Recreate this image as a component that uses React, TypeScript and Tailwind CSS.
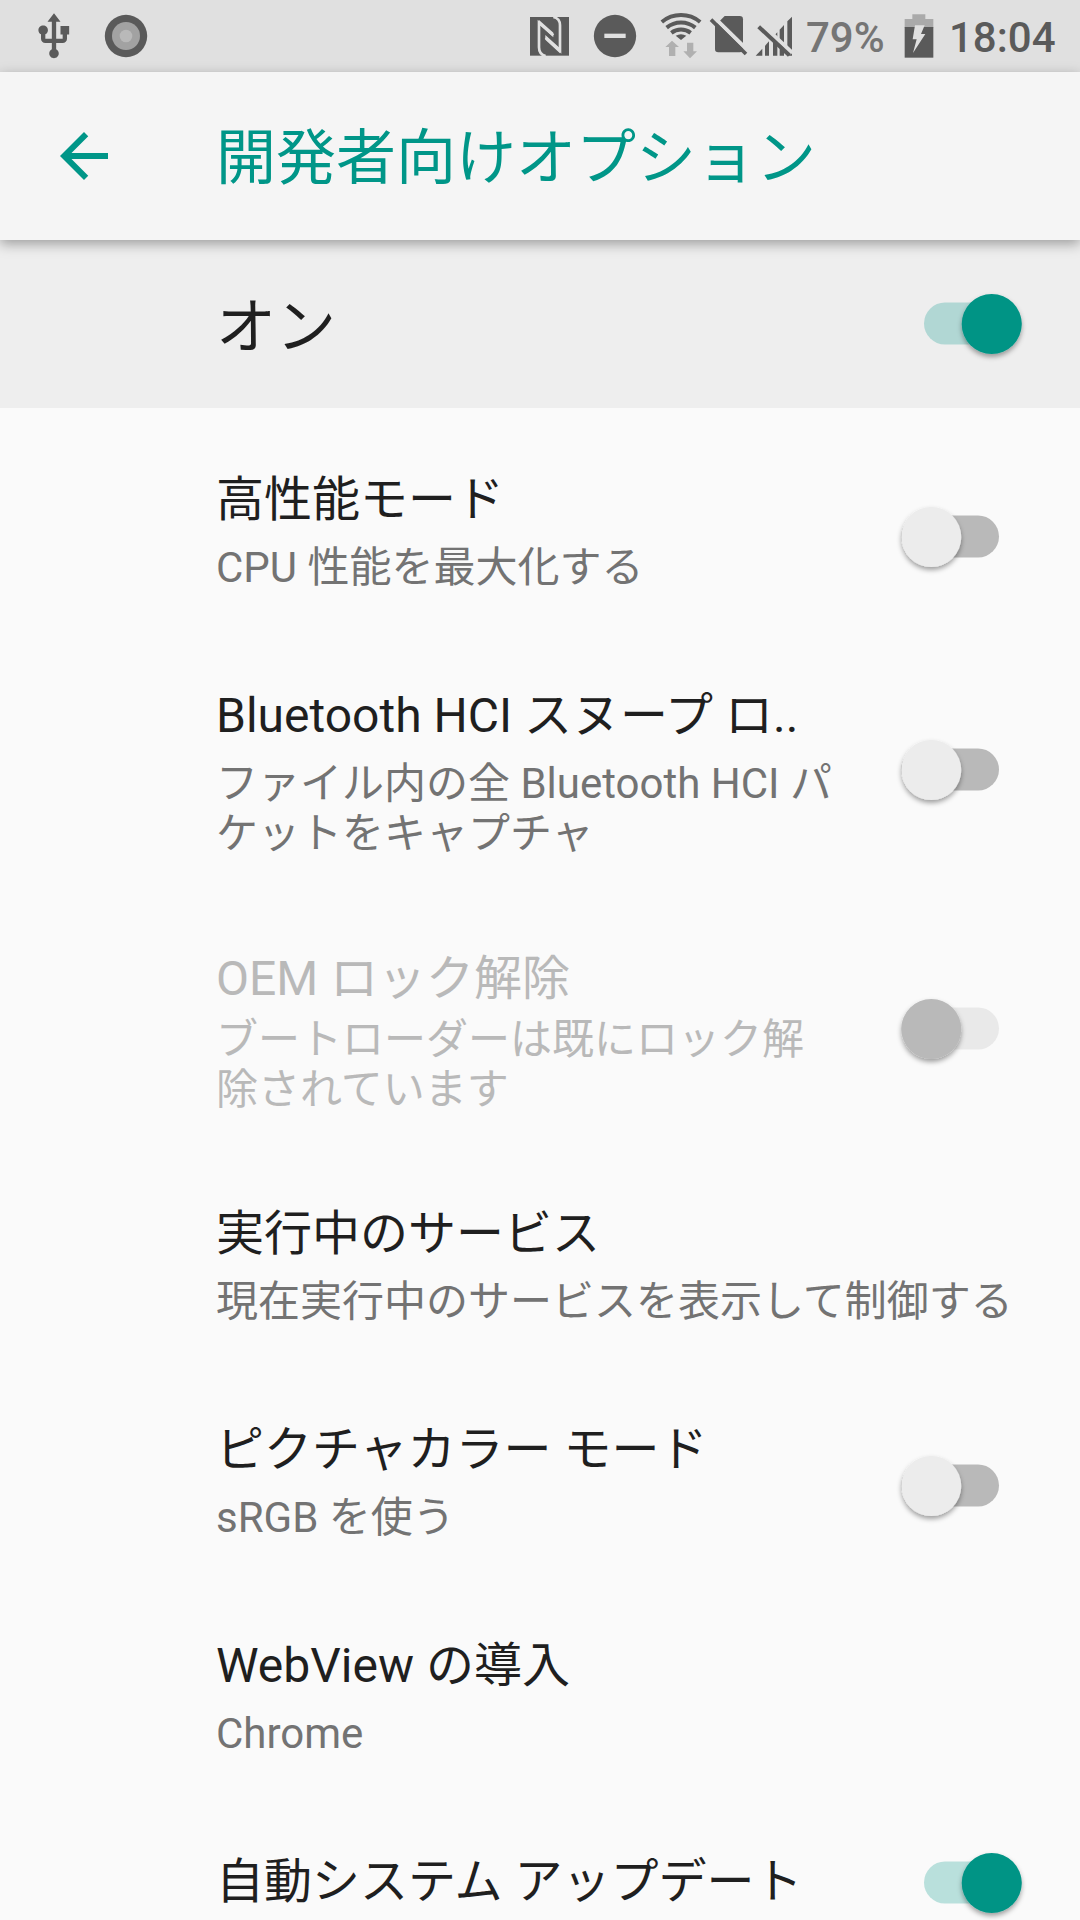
const INK = "#5a5a5a";
const LIGHT = "#e0e0e0";

type SwitchState = "on" | "off" | "disabled";

function Switch({ state, overWhite = true }: { state: SwitchState; overWhite?: boolean }) {
  const on = state === "on";
  const track = on ? (overWhite ? "#b9e0dc" : "#b1d7d4") : state === "off" ? "#b9b9b9" : "#e9e9e9";
  const thumb = on ? "#009485" : state === "off" ? "#ececec" : "#b9b9b9";
  return (
    <svg className="block shrink-0" width="124" height="80" viewBox="0 0 124 80">
      <defs>
        <filter id="thumbShadow" x="-20%" y="-20%" width="140%" height="150%">
          <feDropShadow dx="0" dy="3" stdDeviation="2.5" floodColor="#000" floodOpacity="0.36" />
        </filter>
      </defs>
      <rect x="13" y="18.5" width="98" height="42" rx="21" fill={track} />
      <circle cx={on ? 80.7 : 43.3} cy="40" r="30" fill={thumb} filter="url(#thumbShadow)" />
    </svg>
  );
}

function UsbIcon() {
  return (
    <svg className="ml-[28px] shrink-0" width="52" height="51" viewBox="0 0 24 24" preserveAspectRatio="none" fill={INK}>
      <path d="M15 7v4h1v2h-3V5h2l-3-4-3 4h2v8H8v-2.07c.7-.37 1.2-1.08 1.2-1.93 0-1.21-.99-2.2-2.2-2.2-1.21 0-2.2.99-2.2 2.2 0 .85.5 1.56 1.2 1.93V13c0 1.11.89 2 2 2h3v3.05c-.71.37-1.2 1.1-1.2 1.95 0 1.22.99 2.2 2.2 2.2 1.21 0 2.2-.98 2.2-2.2 0-.85-.49-1.58-1.2-1.95V15h3c1.11 0 2-.89 2-2v-2h1V7h-4z" />
    </svg>
  );
}

function RecordIcon() {
  return (
    <svg className="ml-[24px] shrink-0" width="44" height="44" viewBox="0 0 44 44">
      <circle cx="22" cy="22" r="21.2" fill={INK} />
      <circle cx="22" cy="22" r="14" fill="#a2a2a2" />
      <circle cx="22" cy="22" r="6.3" fill="#b9b9b9" />
    </svg>
  );
}

/* NFC, do-not-disturb, wifi, no-SIM and no-signal glyphs share one 300x72 strip. */
function StatusGlyphs() {
  return (
    <svg className="ml-auto shrink-0" width="300" height="72" viewBox="0 0 900 216">
      <rect x="90" y="51" width="117" height="116" fill={INK} />
      <g fill="none" stroke={LIGHT} strokeWidth="8">
        <path d="M137 168C122 165 117 156 117 142V69L159 109V99L137 79" strokeWidth="0" />
        <path d="M137 168C122 165 117 156 117 142V68L160 106" />
        <path d="M160 51C175 54 180 62 180 76V152L137 113" />
      </g>
      <path d="M117 60L160 98V112L117 73Z" fill={LIGHT} />
      <path d="M180 160L136 119V105L180 145Z" fill={LIGHT} />

      <circle cx="345" cy="108" r="63.5" fill={INK} />
      <rect x="313" y="101" width="64" height="13" fill={LIGHT} />

      <g fill="none" stroke={INK} strokeWidth="12">
        <path d="M485.500 66A90 90 0 0 1 600.500 66" />
        <path d="M500 83A68 68 0 0 1 586 83" />
        <path d="M514 98.500A47 47 0 0 1 572 98.500" />
      </g>
      <path d="M527 107Q543 98 559 107L543 120Z" fill={INK} />
      <g fill="#b0b0b0">
        <path d="M516 122L537 141H526V168H507V141H496Z" />
        <path d="M570 175L550 154H561V128H580V154H591Z" />
      </g>

      <path d="M674 48H719Q729 48 729 58V147Q729 157 719 157H655Q645 157 645 147V77Z" fill={INK} />
      <path d="M640 50L745 153" stroke={LIGHT} strokeWidth="12" />
      <path d="M633 59L738 162" stroke={INK} strokeWidth="11" />

      <g fill={INK}>
        <path d="M767 167L787 146V167Z" />
        <path d="M795 137L807 124V167H795Z" />
        <path d="M819 111L832 97V167H819Z" />
        <path d="M839 89L852 75V167H839Z" />
        <path d="M862 64L876 50V167H862Z" />
      </g>
      <path d="M784 72L877 159" stroke={LIGHT} strokeWidth="13" />
      <path d="M776 80L868 166" stroke={INK} strokeWidth="12" />
    </svg>
  );
}

function BatteryIcon() {
  return (
    <svg className="shrink-0" width="30" height="46" viewBox="0 0 90 138">
      <path d="M25 4H64V18H88V44H2V18H25Z" fill="#aaa" />
      <rect x="2" y="42" width="86" height="92" fill={INK} />
      <path d="M33 37H62L51 63H64L27 120L38 79H26Z" fill={LIGHT} />
    </svg>
  );
}

function StatusBar() {
  return (
    <div className="flex h-[72px] items-center bg-[#e0e0e0] pr-[23px]">
      <UsbIcon />
      <RecordIcon />
      <StatusGlyphs />
      <span className="ml-[6px] w-[80px] whitespace-nowrap pt-[3px] text-[42px] font-medium leading-[48px] text-[#757575]">79%</span>
      <span className="ml-[18px] flex"><BatteryIcon /></span>
      <span className="ml-[15px] w-[108px] whitespace-nowrap pt-[3px] text-[42px] font-medium leading-[48px] text-[#5a5a5a]">18:04</span>
    </div>
  );
}

type Setting = {
  title: string;
  lines: string[];
  height: string;
  gap: string;
  state?: SwitchState;
  lift?: string;
};

const SETTINGS: Setting[] = [
  { title: "高性能モード", lines: ["CPU 性能を最大化する"], height: "h-[216px]", gap: "mt-[13px]", state: "off", lift: "mt-[68px] mr-[68px]" },
  { title: "Bluetooth HCI スヌープ ロ..", lines: ["ファイル内の全 Bluetooth HCI パ", "ケットをキャプチャ"], height: "h-[263px]", gap: "mt-[13px]", state: "off", lift: "mt-[85px] mr-[68px]" },
  { title: "OEM ロック解除", lines: ["ブートローダーは既にロック解", "除されています"], height: "h-[255px]", gap: "mt-[6px]", state: "disabled", lift: "mt-[81px] mr-[68px]" },
  { title: "実行中のサービス", lines: ["現在実行中のサービスを表示して制御する"], height: "h-[216px]", gap: "mt-[13px]" },
  { title: "ピクチャカラー モード", lines: ["sRGB を使う"], height: "h-[216px]", gap: "mt-[13px]", state: "off", lift: "mt-[67px] mr-[68px]" },
  { title: "WebView の導入", lines: ["Chrome"], height: "h-[216px]", gap: "mt-[13px]" },
  { title: "自動システム アップデート", lines: [], height: "h-[109px]", gap: "", state: "on", lift: "mt-[32px] mr-[45px]" },
];

function SettingRow({ title, lines, height, gap, state, lift }: Setting) {
  const disabled = state === "disabled";
  return (
    <div className={`flex shrink-0 items-start justify-between pl-[216px] ${height}`}>
      <div className="whitespace-nowrap pt-[41px]">
        <div className={`text-[48px] leading-[60px] ${disabled ? "text-[#b9b9b9]" : "text-[#1f1f1f]"}`}>{title}</div>
        <div className={`text-[42px] leading-[49.5px] ${gap} ${disabled ? "text-[#b9b9b9]" : "text-[#737373]"}`}>
          {lines.map((line) => (
            <div key={line}>{line}</div>
          ))}
        </div>
      </div>
      {state && (
        <div className={lift}>
          <Switch state={state} />
        </div>
      )}
    </div>
  );
}

export default function App() {
  return (
    <div lang="ja" className="flex h-[1920px] w-[1080px] flex-col overflow-hidden bg-[#fafafa] font-[Roboto,'Noto_Sans_CJK_JP',sans-serif]">
      <StatusBar />
      <header className="relative z-10 flex h-[168px] shrink-0 items-center bg-[#f5f5f5] pl-[48px] shadow-[0_4px_12px_rgba(0,0,0,0.34)]">
        <svg width="72" height="72" viewBox="0 0 24 24" fill="#009688">
          <path d="M20 11H7.83l5.59-5.59L12 4l-8 8 8 8 1.41-1.41L7.83 13H20z" />
        </svg>
        <h1 className="ml-[96px] pt-[6px] text-[60px] leading-[72px] text-[#009688]">開発者向けオプション</h1>
      </header>
      <div className="flex h-[168px] shrink-0 items-center justify-between bg-[#eeeeee] pl-[216px] pr-[45px]">
        <span className="pt-[7px] text-[60px] leading-[72px] text-[#1f1f1f]">オン</span>
        <Switch state="on" overWhite={false} />
      </div>
      <main className="flex flex-col pt-[21px]">
        {SETTINGS.map((s) => (
          <SettingRow key={s.title} {...s} />
        ))}
      </main>
    </div>
  );
}
